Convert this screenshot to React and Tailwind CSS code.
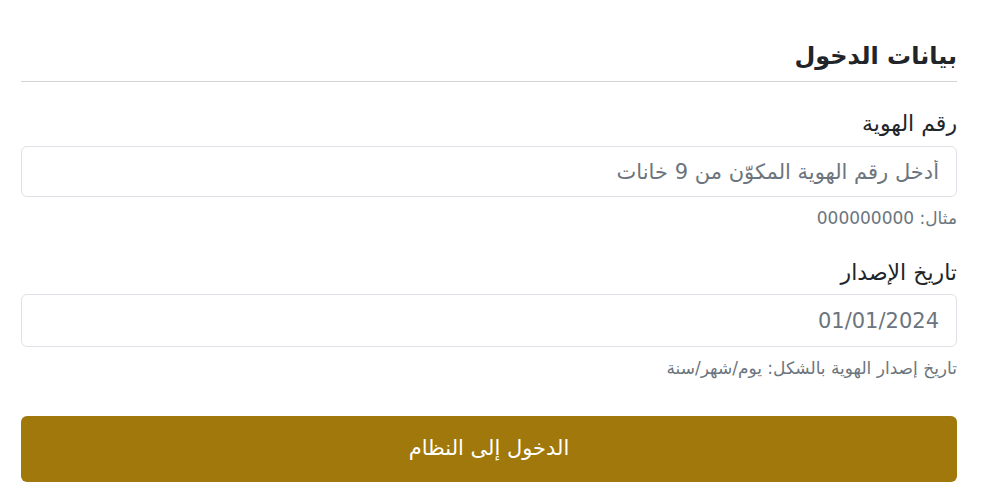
export default function App() {
  return (
    <div
      dir="rtl"
      className="min-h-screen bg-white pl-[21px] pr-[43px] pt-[36px] text-[#212529]"
      style={{ fontFamily: '"DejaVu Sans", sans-serif' }}
    >
      <h2 className="text-[24px] font-bold leading-[40px]">بيانات الدخول</h2>
      <div className="mt-[5px] h-px bg-[#d3d3d3]" />

      <form className="mt-[28px]" onSubmit={(e) => e.preventDefault()}>
        <label className="block text-[22px] leading-[28px]">رقم الهوية</label>
        <input
          type="text"
          placeholder="أدخل رقم الهوية المكوّن من 9 خانات"
          className="mt-[8px] block h-[51px] w-full rounded-[6px] border border-[#dee2e6] px-[17px] text-[21px] placeholder:text-[#6c757d] outline-none"
        />
        <p className="mt-[10px] text-[17px] leading-[22px] text-[#6c757d]">مثال: 000000000</p>

        <label className="mt-[30px] block text-[22px] leading-[28px]">تاريخ الإصدار</label>
        <input
          type="text"
          defaultValue="01/01/2024"
          className="mt-[7px] block h-[53px] w-full rounded-[6px] border border-[#dee2e6] px-[17px] text-[21px] text-[#6c757d] outline-none"
        />
        <p className="mt-[10px] text-[17px] leading-[22px] text-[#6c757d]">
          تاريخ إصدار الهوية بالشكل: يوم/شهر/سنة
        </p>

        <button
          type="submit"
          className="mt-[37px] block h-[66px] w-full rounded-[6px] bg-[#a0780c] text-[21px] text-white"
        >
          الدخول إلى النظام
        </button>
      </form>
    </div>
  );
}
